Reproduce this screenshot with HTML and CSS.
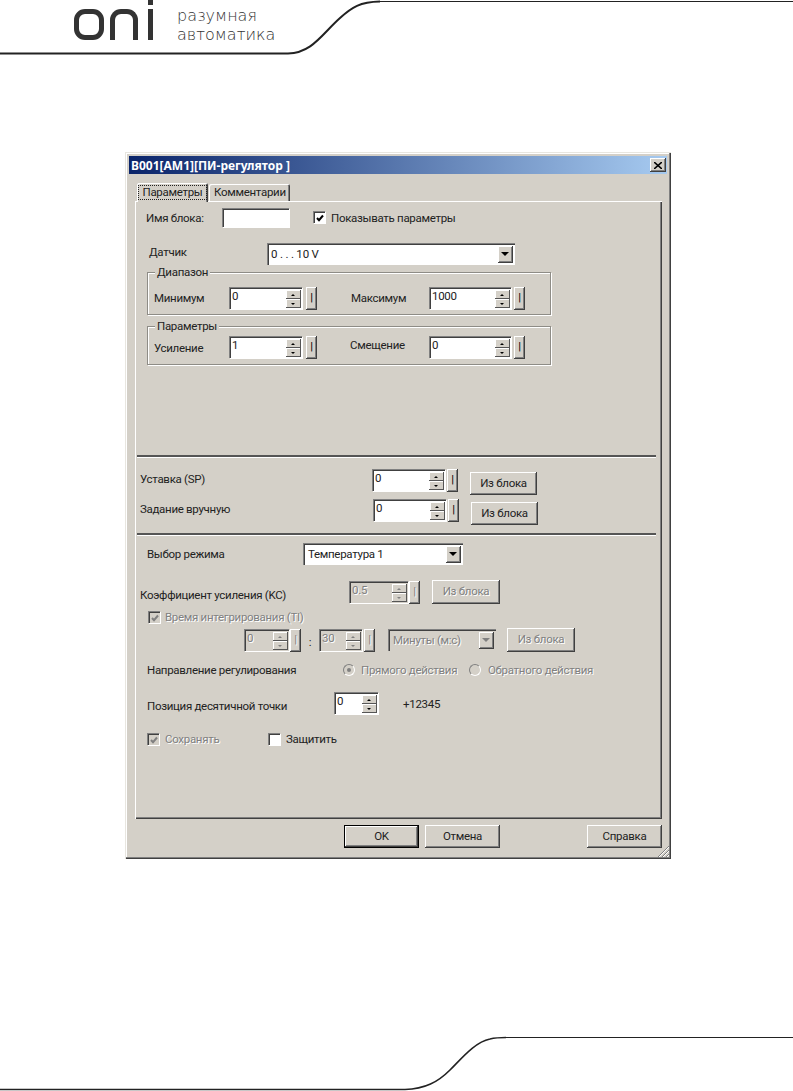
FILE: index.html
```html
<html>
<head>
<meta charset="utf-8">
<title>B001[AM1][ПИ-регулятор ]</title>
<link rel="stylesheet" href="styles.css">
</head>
<body>

<div class="header">
	<svg class="swoosh" width="793" height="55" viewBox="0 0 793 55">
		<path d="M0 53.5 L288 53.5 C312 53 322 34 340 18 C352 7 360 2 380 1.6" fill="none" stroke="#222" stroke-width="2"/>
		<path d="M380 1.5 L793 1.5" fill="none" stroke="#222" stroke-width="1"/>
	</svg>
	<div class="logo" aria-label="oni">
		<div class="logo-o"></div>
		<div class="logo-n"></div>
		<div class="logo-i"><div class="logo-dot"></div><div class="logo-stem"></div></div>
	</div>
	<div class="slogan">разумная<br>автоматика</div>
</div>

<div class="dialog">
	<div class="title">
		<span>B001[AM1][ПИ-регулятор ]</span>
		<div class="close">
			<svg width="8" height="7" viewBox="0 0 8 7"><path d="M0 0 L8 7 M8 0 L0 7" stroke="#000" stroke-width="1.6" fill="none"/></svg>
		</div>
	</div>

	<div class="tabs">
		<div class="tab active"><span class="focus">Параметры</span></div>
		<div class="tab">Комментарии</div>
	</div>

	<div class="panel">
		<div class="row r-name">
			<div class="lbl w76 nudge">Имя блока:</div>
			<div class="edit w67"></div>
			<div class="check ml24"><svg width="8" height="8" viewBox="0 0 8 8"><path d="M1 4 L3 6.2 L7 1.5" stroke="#000" stroke-width="2" fill="none"/></svg></div>
			<div class="lbl ml6 nudge">Показывать параметры</div>
		</div>

		<div class="row r-sensor">
			<div class="lbl w118 lift2">Датчик</div>
			<div class="combo w248">
				<div class="combo-text spaced">0 . . . 10 V</div>
				<div class="combo-btn"></div>
			</div>
		</div>

		<div class="group g-range">
			<div class="legend">Диапазон</div>
			<div class="row in-group">
				<div class="lbl w75">Минимум</div>
				<div class="spin w73"><div class="spin-text">0</div><div class="spin-btns"><div class="up"></div><div class="down"></div></div></div>
				<div class="btn-i ml4">|</div>
				<div class="lbl w78 ml34">Максимум</div>
				<div class="spin w82"><div class="spin-text">1000</div><div class="spin-btns"><div class="up"></div><div class="down"></div></div></div>
				<div class="btn-i ml3">|</div>
			</div>
		</div>

		<div class="group g-params">
			<div class="legend">Параметры</div>
			<div class="row in-group">
				<div class="lbl w75 nudge">Усиление</div>
				<div class="spin w73"><div class="spin-text">1</div><div class="spin-btns"><div class="up"></div><div class="down"></div></div></div>
				<div class="btn-i ml4">|</div>
				<div class="lbl w79 ml33 lift">Смещение</div>
				<div class="spin w82"><div class="spin-text">0</div><div class="spin-btns"><div class="up"></div><div class="down"></div></div></div>
				<div class="btn-i ml3">|</div>
			</div>
		</div>

		<div class="rule r1"></div>

		<div class="row r-sp">
			<div class="lbl w232 line22">Уставка (SP)</div>
			<div class="spin w73"><div class="spin-text">0</div><div class="spin-btns"><div class="up"></div><div class="down"></div></div></div>
			<div class="btn-i ml2">|</div>
			<div class="btn w67 ml12 drop3">Из блока</div>
		</div>
		<div class="row r-manual">
			<div class="lbl w233 line22">Задание вручную</div>
			<div class="spin w73"><div class="spin-text">0</div><div class="spin-btns"><div class="up"></div><div class="down"></div></div></div>
			<div class="btn-i ml2">|</div>
			<div class="btn w67 ml12 drop3">Из блока</div>
		</div>

		<div class="rule r2"></div>

		<div class="row r-mode">
			<div class="lbl w156">Выбор режима</div>
			<div class="combo w160">
				<div class="combo-text">Температура 1</div>
				<div class="combo-btn"></div>
			</div>
		</div>

		<div class="row r-kc">
			<div class="lbl w209 nudge2">Коэффициент усиления (KC)</div>
			<div class="spin w59 off"><div class="spin-text">0.5</div><div class="spin-btns"><div class="up"></div><div class="down"></div></div></div>
			<div class="btn-i ml1 off">|</div>
			<div class="btn w68 ml12 off">Из блока</div>
		</div>

		<div class="row r-ti">
			<div class="check off"><svg width="8" height="8" viewBox="0 0 8 8"><path d="M1 4 L3 6.2 L7 1.5" stroke="#808080" stroke-width="2" fill="none"/></svg></div>
			<div class="lbl ml5 off">Время интегрирования (TI)</div>
		</div>

		<div class="row r-time">
			<div class="spin w45 off"><div class="spin-text">0</div><div class="spin-btns"><div class="up"></div><div class="down"></div></div></div>
			<div class="btn-i ml1 off">|</div>
			<div class="colon">:</div>
			<div class="spin w43 off"><div class="spin-text">30</div><div class="spin-btns"><div class="up"></div><div class="down"></div></div></div>
			<div class="btn-i ml2 off">|</div>
			<div class="combo w108 ml13 off">
				<div class="combo-text">Минуты (м:с)</div>
				<div class="combo-btn"></div>
			</div>
			<div class="btn w68 ml11 off">Из блока</div>
		</div>

		<div class="row r-dir">
			<div class="lbl w196">Направление регулирования</div>
			<div class="radio on"></div>
			<div class="lbl w108 ml6 off">Прямого действия</div>
			<div class="radio"></div>
			<div class="lbl ml7 off">Обратного действия</div>
		</div>

		<div class="row r-dec">
			<div class="lbl w187 nudge2">Позиция десятичной точки</div>
			<div class="spin w44"><div class="spin-text">0</div><div class="spin-btns"><div class="up"></div><div class="down"></div></div></div>
			<div class="lbl ml25 nudge">+12345</div>
		</div>

		<div class="row r-save">
			<div class="check off"><svg width="8" height="8" viewBox="0 0 8 8"><path d="M1 4 L3 6.2 L7 1.5" stroke="#808080" stroke-width="2" fill="none"/></svg></div>
			<div class="lbl w103 ml6 off">Сохранять</div>
			<div class="check"></div>
			<div class="lbl ml6">Защитить</div>
		</div>
	</div>

	<div class="actions">
		<div class="btn default">OK</div>
		<div class="btn ml6 w75">Отмена</div>
		<div class="btn ml87 w75">Справка</div>
	</div>

	<svg class="grip" width="14" height="14" viewBox="0 0 14 14">
		<path d="M13 2 L2 13 M13 6 L6 13 M13 10 L10 13" stroke="#808080" stroke-width="1" fill="none"/>
		<path d="M13 3 L3 13 M13 7 L7 13 M13 11 L11 13" stroke="#fff" stroke-width="1" fill="none"/>
	</svg>
</div>

<div class="footer">
	<svg width="793" height="55" viewBox="0 0 793 55">
		<path d="M0 53.5 L405 53.5 C425 53 438 46 450 34 C462 22 475 6 490 3 C495 1.8 500 1.5 506 1.5" fill="none" stroke="#222" stroke-width="1.6"/>
		<path d="M506 1.5 L793 1.5" fill="none" stroke="#222" stroke-width="1"/>
	</svg>
</div>

</body>
</html>
```

FILE: styles.css
```css
* {
	box-sizing: border-box;
}
html, body {
	margin: 0;
	padding: 0;
	background: #fff;
	overflow: hidden;
}
body {
	width: 793px;
	height: 1091px;
	font-family: Roboto, "Liberation Sans", Arial, sans-serif;
	font-size: 11.5px;
	letter-spacing: -0.3px;
	color: #222;
}

/* page header */
.header {
	position: relative;
	height: 55px;
	display: flex;
	padding: 9px 0 0 74px;
	letter-spacing: 0;
}
.swoosh {
	position: absolute;
	left: 0;
	top: 0;
}
.logo {
	display: flex;
	height: 31px;
}
.logo-o {
	width: 30px;
	height: 31px;
	border: 5px solid #333;
	border-radius: 11px;
}
.logo-n {
	width: 28px;
	height: 31px;
	margin-left: 6px;
	border: 5px solid #333;
	border-bottom: 0;
	border-radius: 11px 11px 0 0;
}
.logo-i {
	width: 5px;
	margin: -9px 0 0 10px;
}
.logo-dot {
	height: 5px;
	margin-bottom: 4px;
	background: #333;
}
.logo-stem {
	height: 31px;
	background: #333;
}
.slogan {
	margin: -3px 0 0 24px;
	font-family: "DejaVu Sans", sans-serif;
	font-weight: 200;
	font-size: 16px;
	line-height: 19px;
	color: #333;
}

/* dialog window */
.dialog {
	position: relative;
	width: 546px;
	height: 707px;
	margin: 97px 0 0 125px;
	padding: 4px;
	background: #d4d0c8;
	box-shadow: inset 1px 1px 0 #e8e6e0, inset -1px -1px 0 #404040, inset -2px -2px 0 #808080, inset 2px 2px 0 #fff;
}
.title {
	height: 18px;
	padding-left: 2px;
	display: flex;
	align-items: center;
	justify-content: space-between;
	background: linear-gradient(to right, #0a246a, #a6caf0);
	color: #fff;
	font-weight: bold;
	font-size: 12px;
	letter-spacing: 0;
	font-family: "Noto Sans", sans-serif;
}
.close {
	width: 16px;
	height: 14px;
	margin-right: 1px;
	display: flex;
	align-items: center;
	justify-content: center;
	background: #d4d0c8;
	box-shadow: inset -1px -1px 0 #404040, inset 1px 1px 0 #fff, inset -2px -2px 0 #808080;
}
.tabs {
	display: flex;
	align-items: flex-end;
	height: 27px;
	padding-left: 8px;
	margin-left: 0;
}
.tab {
	height: 17px;
	padding: 0 5px;
	width: 81px;
	line-height: 16px;
	white-space: nowrap;
	text-align: center;
	margin-left: 1px;
	border-radius: 2px 2px 0 0;
	box-shadow: inset 1px 1px 0 #fff, inset -1px 0 0 #404040, inset -2px 0 0 #808080;
}
.tab.active {
	position: relative;
	z-index: 1;
	width: 71px;
	height: 19px;
	margin-left: 0;
	margin-bottom: -1px;
	padding: 3px 2px 0;
	line-height: 13px;
	background: #d4d0c8;
}
.focus {
	display: block;
	outline: 1px dotted #222;
	outline-offset: 0;
}
.panel {
	width: 527px;
	height: 618px;
	margin-left: 6px;
	padding-top: 6px;
	box-shadow: inset 1px 1px 0 #fff, inset -1px -1px 0 #404040, inset -2px -2px 0 #808080;
}
.actions {
	display: flex;
	margin-top: 6px;
	padding-left: 215px;
}
.grip {
	position: absolute;
	right: 1px;
	bottom: 1px;
}

/* rows */
.row {
	display: flex;
	align-items: center;
	white-space: nowrap;
}
.r-name { height: 20px; padding-left: 11px; }
.r-sensor { height: 22px; margin-top: 16px; padding-left: 14px; }
.in-group { height: 22px; padding-left: 6px; }
.r-sp { height: 26px; margin-top: 11px; padding-left: 5px; align-items: flex-start; }
.r-manual { height: 26px; margin-top: 4px; padding-left: 5px; align-items: flex-start; }
.r-mode { height: 21px; margin-top: 7px; padding-left: 12px; }
.r-kc { height: 24px; margin-top: 16px; padding-left: 5px; }
.r-ti { height: 12px; margin-top: 7px; padding-left: 13px; }
.r-time { height: 24px; margin-top: 5px; padding-left: 109px; }
.r-dir { height: 20px; margin-top: 8px; padding-left: 12px; }
.r-dec { height: 22px; margin-top: 12px; padding-left: 12px; }
.r-save { height: 12px; margin-top: 19px; padding-left: 12px; }

.group {
	position: relative;
	width: 404px;
	margin-left: 12px;
	border: 1px solid #8e8c86;
	box-shadow: 1px 1px 0 #fff, inset 1px 1px 0 #fff;
}
.g-range { height: 43px; margin-top: 7px; padding-top: 14px; }
.g-params { height: 39px; margin-top: 11px; padding-top: 9px; }
.legend {
	position: absolute;
	left: 7px;
	top: -8px;
	padding: 0 2px;
	line-height: 14px;
	background: #d4d0c8;
}
.rule {
	width: 519px;
	height: 3px;
	margin-left: 2px;
	background: #555;
	border-bottom: 1px solid #fff;
}
.r1 { margin-top: 90px; }
.r2 { margin-top: 8px; }

/* controls */
.lbl {
	line-height: 14px;
}
.line22 { line-height: 20px; }
.lift { margin-top: -4px; }
.lift2 { margin-top: -4px; }
.nudge { margin-top: 2px; }
.nudge2 { margin-top: 5px; }
.edit {
	height: 19px;
	margin-top: 1px;
	background: #fff;
	border-top: 1px solid #808080;
	border-left: 1px solid #808080;
	box-shadow: inset 1px 1px 0 #404040, 1px 1px 0 #fff;
}
.check {
	width: 12px;
	height: 12px;
	flex: none;
	display: flex;
	align-items: center;
	justify-content: center;
	background: #fff;
	border-top: 1px solid #808080;
	border-left: 1px solid #808080;
	box-shadow: inset 1px 1px 0 #404040, 1px 1px 0 #fff;
}
.check.off {
	background: #d4d0c8;
}
.radio {
	position: relative;
	width: 12px;
	height: 12px;
	flex: none;
	border-radius: 50%;
	background: #d4d0c8;
	border: 1px solid #808080;
	border-right-color: #fff;
	border-bottom-color: #fff;
}
.radio.on::after {
	content: "";
	position: absolute;
	left: 3px;
	top: 3px;
	width: 4px;
	height: 4px;
	border-radius: 50%;
	background: #808080;
}
.combo {
	display: flex;
	height: 22px;
	flex: none;
	background: #fff;
	padding: 2px 2px 2px 2px;
	border-top: 1px solid #808080;
	border-left: 1px solid #808080;
	box-shadow: inset 1px 1px 0 #404040;
}
.combo.off {
	background: #d4d0c8;
}
.combo-text {
	flex: 1;
	padding-left: 2px;
	line-height: 16px;
}
.spaced {
	padding-left: 1px;
	letter-spacing: -0.2px;
}
.combo-btn {
	position: relative;
	width: 15px;
	background: #d4d0c8;
	box-shadow: inset -1px -1px 0 #404040, inset 1px 1px 0 #fff, inset -2px -2px 0 #808080;
}
.combo-btn::after {
	content: "";
	position: absolute;
	left: 3px;
	top: 6px;
	border: 4px solid transparent;
	border-top: 4px solid #000;
	border-bottom: 0;
}
.off .combo-btn::after {
	border-top-color: #808080;
}
.spin {
	display: flex;
	height: 22px;
	flex: none;
	background: #fff;
	padding: 2px 1px 1px 1px;
	border-top: 1px solid #808080;
	border-left: 1px solid #808080;
	box-shadow: inset 1px 1px 0 #404040, 1px 1px 0 #fff;
}
.spin.off {
	background: #d4d0c8;
}
.spin-text {
	flex: 1;
	padding-left: 1px;
	line-height: 13px;
}
.spin-btns {
	width: 15px;
	display: flex;
	flex-direction: column;
}
.up, .down {
	position: relative;
	flex: 1;
	background: #d4d0c8;
	box-shadow: inset -1px -1px 0 #555, inset 1px 1px 0 #fff;
}
.up::after, .down::after {
	content: "";
	position: absolute;
	left: 5px;
	top: 4px;
	border: 2px solid transparent;
	border-top: 0;
	border-bottom: 2px solid #000;
}
.down::after {
	border-bottom: 0;
	border-top: 2px solid #000;
}
.off .up::after, .off .down::after {
	border-top-color: #808080;
	border-bottom-color: #808080;
}
.btn-i {
	width: 11px;
	height: 23px;
	flex: none;
	text-align: center;
	line-height: 21px;
	color: #000;
	background: #d4d0c8;
	box-shadow: inset -1px -1px 0 #404040, inset 1px 1px 0 #fff, inset -2px -2px 0 #808080;
}
.btn {
	height: 23px;
	flex: none;
	text-align: center;
	line-height: 22px;
	background: #d4d0c8;
	box-shadow: inset -1px -1px 0 #404040, inset 1px 1px 0 #fff, inset -2px -2px 0 #808080;
}
.btn.off {
	height: 24px;
}
.btn.default {
	width: 75px;
	border: 1px solid #000;
	line-height: 21px;
}
.colon {
	width: 18px;
	text-align: center;
	padding-top: 4px;
}
.drop3 { margin-top: 3px; }

/* disabled look, after the controls so it wins */
.off, .off .spin-text, .off .combo-text {
	color: #808080;
	text-shadow: 1px 1px 0 #fff;
}

/* widths and gaps */
.w43 { width: 43px; }
.w44 { width: 44px; }
.w45 { width: 45px; }
.w59 { width: 59px; }
.w67 { width: 67px; }
.w68 { width: 68px; }
.w73 { width: 73px; }
.w75 { width: 75px; }
.w76 { width: 76px; }
.w78 { width: 78px; }
.w79 { width: 79px; }
.w82 { width: 82px; }
.w103 { width: 103px; }
.w108 { width: 108px; }
.w118 { width: 118px; }
.w156 { width: 156px; }
.w160 { width: 160px; }
.w187 { width: 187px; }
.w196 { width: 196px; }
.w209 { width: 209px; }
.w232 { width: 232px; }
.w233 { width: 233px; }
.w248 { width: 248px; }
.ml1 { margin-left: 1px; }
.ml2 { margin-left: 2px; }
.ml3 { margin-left: 3px; }
.ml4 { margin-left: 4px; }
.ml5 { margin-left: 5px; }
.ml6 { margin-left: 6px; }
.ml7 { margin-left: 7px; }
.ml11 { margin-left: 11px; }
.ml12 { margin-left: 12px; }
.ml13 { margin-left: 13px; }
.ml24 { margin-left: 24px; }
.ml25 { margin-left: 25px; }
.ml33 { margin-left: 33px; }
.ml34 { margin-left: 34px; }
.ml87 { margin-left: 87px; }

/* page footer */
.footer {
	height: 55px;
	margin-top: 177px;
}
.footer svg {
	display: block;
}
```
